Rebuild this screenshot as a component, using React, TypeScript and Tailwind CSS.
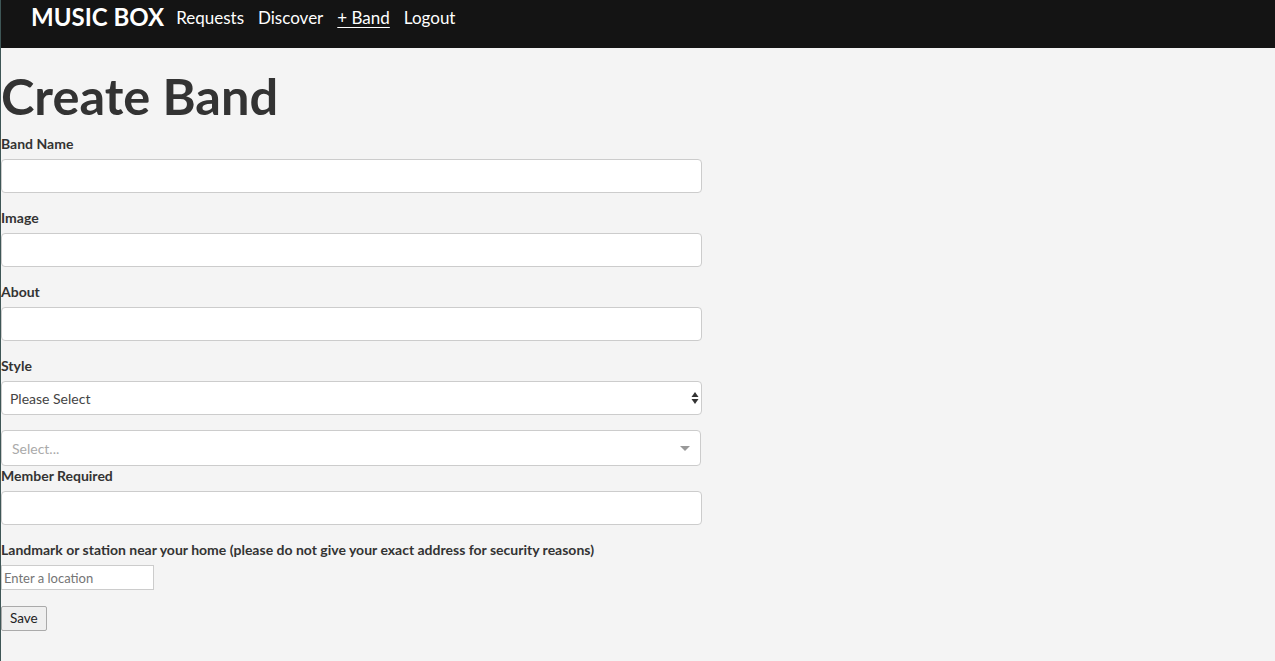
import { useState } from 'react'

const FIELDS_TOP = ['Band Name', 'Image', 'About']

function Label({ children }: { children: React.ReactNode }) {
  return <label className="block text-[14px] leading-[20px] font-bold text-[#333] mb-[5px]">{children}</label>
}

function TextInput() {
  return (
    <input
      type="text"
      className="block w-[701px] h-[34px] bg-white border border-[#ccc] rounded-[4px] px-3 text-[14px] text-[#555] focus:outline-none"
    />
  )
}

export default function App() {
  const [style, setStyle] = useState('')
  const [location, setLocation] = useState('')

  return (
    <div className="min-h-[661px] bg-[#f4f4f4] border-l border-[#3e5656] text-[#333]" style={{ fontFamily: 'Lato, "Open Sans", sans-serif' }}>
      <nav className="h-[48px] bg-[#141414] flex items-start pl-[30px] pt-[1px]">
        <span className="text-white font-bold text-[24px] leading-[32px]">MUSIC BOX</span>
        <div className="flex gap-[14px] ml-[12px] pt-[3px] text-white text-[17px] leading-[28px]">
          <a>Requests</a>
          <a>Discover</a>
          <a className="underline underline-offset-[3px]">+ Band</a>
          <a>Logout</a>
        </div>
      </nav>

      <div>
        <h1 className="text-[50.5px] leading-[56px] font-bold text-[#333] mt-[20px] mb-[10px]">Create Band</h1>

        {FIELDS_TOP.map(f => (
          <div key={f} className="mb-[15px]">
            <Label>{f}</Label>
            <TextInput />
          </div>
        ))}

        <div className="mb-[15px]">
          <Label>Style</Label>
          <div className="relative w-[701px]">
            <select
              value={style}
              onChange={e => setStyle(e.target.value)}
              className="appearance-none block w-full h-[34px] bg-white border border-[#ccc] rounded-[4px] pl-[8px] text-[14px] text-[#444] focus:outline-none"
            >
              <option value="">Please Select</option>
              <option>Rock</option>
              <option>Jazz</option>
              <option>Pop</option>
            </select>
            <svg className="absolute right-[3px] top-[10px] pointer-events-none" width="8" height="14" viewBox="0 0 8 14">
              <path d="M4 1 L7.5 6 H0.5 Z" fill="#333" />
              <path d="M4 13 L7.5 8 H0.5 Z" fill="#333" />
            </svg>
          </div>
        </div>

        <div className="relative w-[700px] h-[36px] bg-white border border-[#ccc] rounded-[4px] flex items-center">
          <span className="pl-[10px] text-[14px] text-[#aaa]">Select...</span>
          <svg className="absolute right-[10px] top-[15px]" width="10" height="5" viewBox="0 0 10 5">
            <path d="M0 0 H10 L5 5 Z" fill="#999" />
          </svg>
        </div>

        <div className="mb-[15px]">
          <Label>Member Required</Label>
          <TextInput />
        </div>

        <Label>Landmark or station near your home (please do not give your exact address for security reasons)</Label>
        <input
          type="text"
          value={location}
          onChange={e => setLocation(e.target.value)}
          placeholder="Enter a location"
          className="block w-[153px] h-[25px] bg-white border border-[#ccc] px-[2px] text-[13px] text-[#333] placeholder:text-[#757575] focus:outline-none"
        />

        <button className="mt-[16px] h-[25px] px-[8px] text-[13.5px] text-[#222] bg-[#efefef] border border-[#aaa] rounded-[2px]">Save</button>
      </div>
    </div>
  )
}
